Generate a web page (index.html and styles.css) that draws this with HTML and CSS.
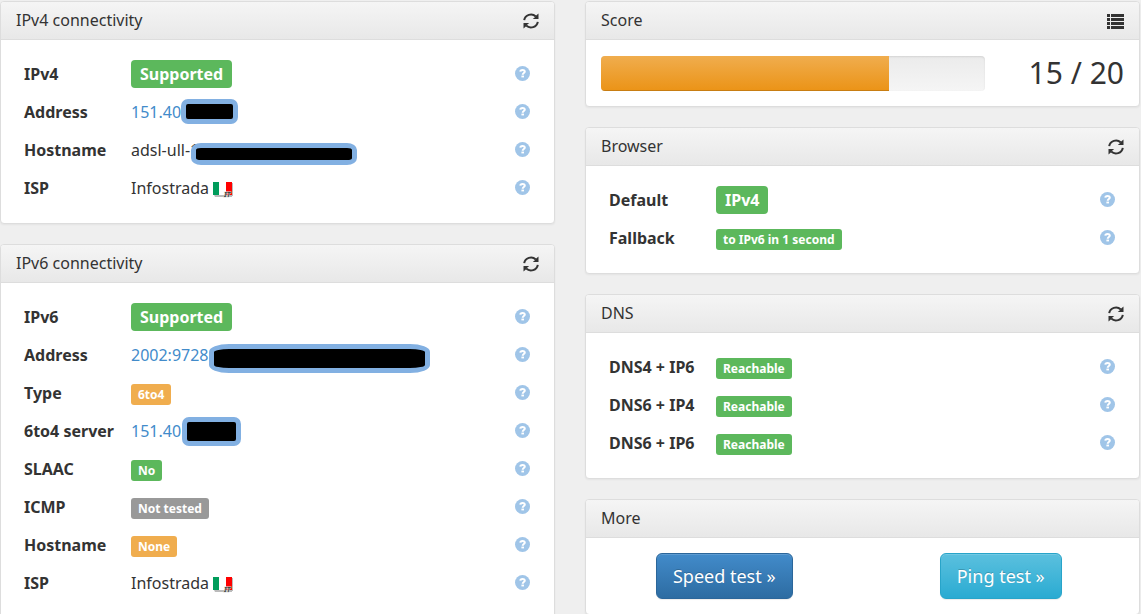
FILE: index.html
```html
<!DOCTYPE html>
<html lang="en">
<head>
<meta charset="UTF-8">
<title>IPv6 test</title>
<meta name="viewport" content="width=device-width, initial-scale=1.0">
<link rel="stylesheet" href="styles.css">
</head>
<body>

<svg class="sprite" aria-hidden="true">
  <symbol id="refresh" viewBox="0 0 16 16">
    <path d="M1.2 7.2A6.9 6.6 0 0 1 12.8 3.4M14.8 8.8A6.9 6.6 0 0 1 3.2 12.6" fill="none" stroke="currentColor" stroke-width="2"/>
    <path d="M15.5 .4V6H9.8L11.6 4.4L13.2 2.4ZM.5 15.6V10H6.2L4.4 11.6L2.8 13.6Z" fill="currentColor"/>
  </symbol>
  <symbol id="list" viewBox="0 0 17 16">
    <path d="M0 1h3v3H0zM4 1h13v3H4zM0 5h3v3H0zM4 5h13v3H4zM0 9h3v3H0zM4 9h13v3H4zM0 13h3v3H0zM4 13h13v3H4z" fill="currentColor"/>
  </symbol>
  <symbol id="help" viewBox="0 0 15 15">
    <circle cx="7.5" cy="7.5" r="7.5" fill="#a0c5e8"/>
    <path d="M5.3 5.6C5.4 3.4 9.8 3.3 9.8 5.6C9.8 7.1 7.7 7 7.7 8.7" fill="none" stroke="#fff" stroke-width="2"/>
    <path d="M6.4 9.6h2.6v1.8H6.4z" fill="#fff"/>
  </symbol>
  <symbol id="flag-it" viewBox="0 0 21 17">
    <path d="M1 14h18v2H2zM19 2h1v13h-1z" fill="#bbb"/>
    <path d="M0 1h6v13H0z" fill="#009c5b"/>
    <path d="M6 1h7v12H6z" fill="#fff"/>
    <path d="M13 1h6v13h-6z" fill="#f00"/>
    <text x="11" y="16" font-family="Noto Sans, sans-serif" font-size="7" font-style="italic" font-weight="bold" fill="#444" stroke="#ddd" stroke-width="1" paint-order="stroke">IT</text>
  </symbol>
</svg>

<main>
  <div class="column">
    <section class="panel">
      <div class="panel-heading">
        <h2>IPv4 connectivity</h2>
        <button class="icon-button" aria-label="Refresh IPv4"><svg class="icon"><use href="#refresh"/></svg></button>
      </div>
      <div class="panel-body">
        <table>
          <tr><th scope="row">IPv4</th><td><span class="label large success">Supported</span></td><td class="help"><a href="#" aria-label="Help"><svg><use href="#help"/></svg></a></td></tr>
          <tr><th scope="row">Address</th><td><span class="masked"><a href="#">151.40.</a><span class="mask short"></span></span></td><td class="help"><a href="#" aria-label="Help"><svg><use href="#help"/></svg></a></td></tr>
          <tr><th scope="row">Hostname</th><td><span class="masked">adsl-ull-1<span class="mask host"></span></span></td><td class="help"><a href="#" aria-label="Help"><svg><use href="#help"/></svg></a></td></tr>
          <tr><th scope="row">ISP</th><td>Infostrada <svg class="flag"><use href="#flag-it"/></svg></td><td class="help"><a href="#" aria-label="Help"><svg><use href="#help"/></svg></a></td></tr>
        </table>
      </div>
    </section>

    <section class="panel">
      <div class="panel-heading">
        <h2>IPv6 connectivity</h2>
        <button class="icon-button" aria-label="Refresh IPv6"><svg class="icon"><use href="#refresh"/></svg></button>
      </div>
      <div class="panel-body">
        <table>
          <tr><th scope="row">IPv6</th><td><span class="label large success">Supported</span></td><td class="help"><a href="#" aria-label="Help"><svg><use href="#help"/></svg></a></td></tr>
          <tr><th scope="row">Address</th><td><span class="masked"><a href="#">2002:9728:</a><span class="mask long"></span></span></td><td class="help"><a href="#" aria-label="Help"><svg><use href="#help"/></svg></a></td></tr>
          <tr><th scope="row">Type</th><td><span class="label warning">6to4</span></td><td class="help"><a href="#" aria-label="Help"><svg><use href="#help"/></svg></a></td></tr>
          <tr><th scope="row">6to4 server</th><td><span class="masked"><a href="#">151.40.</a><span class="mask server"></span></span></td><td class="help"><a href="#" aria-label="Help"><svg><use href="#help"/></svg></a></td></tr>
          <tr><th scope="row">SLAAC</th><td><span class="label success">No</span></td><td class="help"><a href="#" aria-label="Help"><svg><use href="#help"/></svg></a></td></tr>
          <tr><th scope="row">ICMP</th><td><span class="label">Not tested</span></td><td class="help"><a href="#" aria-label="Help"><svg><use href="#help"/></svg></a></td></tr>
          <tr><th scope="row">Hostname</th><td><span class="label warning">None</span></td><td class="help"><a href="#" aria-label="Help"><svg><use href="#help"/></svg></a></td></tr>
          <tr><th scope="row">ISP</th><td>Infostrada <svg class="flag"><use href="#flag-it"/></svg></td><td class="help"><a href="#" aria-label="Help"><svg><use href="#help"/></svg></a></td></tr>
        </table>
      </div>
    </section>
  </div>

  <div class="column">
    <section class="panel">
      <div class="panel-heading">
        <h2>Score</h2>
        <button class="icon-button" aria-label="Score details"><svg class="icon list"><use href="#list"/></svg></button>
      </div>
      <div class="panel-body score">
        <div class="progress"><div class="progress-bar" style="width: 75%"></div></div>
        <div class="score-total">15 / 20</div>
      </div>
    </section>

    <section class="panel">
      <div class="panel-heading">
        <h2>Browser</h2>
        <button class="icon-button" aria-label="Refresh browser"><svg class="icon"><use href="#refresh"/></svg></button>
      </div>
      <div class="panel-body">
        <table>
          <tr><th scope="row">Default</th><td><span class="label large success">IPv4</span></td><td class="help"><a href="#" aria-label="Help"><svg><use href="#help"/></svg></a></td></tr>
          <tr><th scope="row">Fallback</th><td><span class="label success">to IPv6 in 1 second</span></td><td class="help"><a href="#" aria-label="Help"><svg><use href="#help"/></svg></a></td></tr>
        </table>
      </div>
    </section>

    <section class="panel">
      <div class="panel-heading">
        <h2>DNS</h2>
        <button class="icon-button" aria-label="Refresh DNS"><svg class="icon"><use href="#refresh"/></svg></button>
      </div>
      <div class="panel-body">
        <table>
          <tr><th scope="row">DNS4 + IP6</th><td><span class="label success">Reachable</span></td><td class="help"><a href="#" aria-label="Help"><svg><use href="#help"/></svg></a></td></tr>
          <tr><th scope="row">DNS6 + IP4</th><td><span class="label success">Reachable</span></td><td class="help"><a href="#" aria-label="Help"><svg><use href="#help"/></svg></a></td></tr>
          <tr><th scope="row">DNS6 + IP6</th><td><span class="label success">Reachable</span></td><td class="help"><a href="#" aria-label="Help"><svg><use href="#help"/></svg></a></td></tr>
        </table>
      </div>
    </section>

    <section class="panel">
      <div class="panel-heading">
        <h2>More</h2>
      </div>
      <div class="panel-body more">
        <button class="btn primary">Speed test »</button>
        <button class="btn info">Ping test »</button>
      </div>
    </section>
  </div>
</main>

</body>
</html>
```

FILE: styles.css
```css
* {
  box-sizing: border-box;
}

body {
  margin: 0;
  padding: 1px 1px 0 0;
  background: #efefef;
  color: #333;
  font-family: "Noto Sans", sans-serif;
  font-size: 16px;
  line-height: 22px;
}

a {
  color: #428bca;
  text-decoration: none;
}

.sprite {
  display: none;
}

main {
  display: grid;
  grid-template-columns: 1fr 1fr;
  gap: 30px;
}

.panel {
  margin-bottom: 20px;
  background: #fff;
  border: 1px solid #ddd;
  border-radius: 4px;
  box-shadow: 0 1px 2px rgba(0,0,0,0.05);
}

.panel-heading {
  display: flex;
  justify-content: space-between;
  align-items: center;
  padding: 10px 15px;
  background: linear-gradient(#f5f5f5, #e8e8e8);
  border-bottom: 1px solid #ddd;
  border-radius: 3px 3px 0 0;
}

h2 {
  margin: 0;
  font-size: 16px;
  font-weight: normal;
  line-height: 17px;
}

.icon-button {
  padding: 0;
  border: none;
  background: none;
  color: #333;
  cursor: pointer;
}

.icon {
  display: block;
  width: 16px;
  height: 16px;
}

.icon.list {
  width: 17px;
}

.panel-body {
  padding: 16px 15px 15px;
}

table {
  width: 100%;
  border-collapse: collapse;
}

th,
td {
  height: 38px;
  padding: 0 8px 2px;
  text-align: left;
  white-space: nowrap;
}

th {
  width: 107px;
}

td.help {
  padding: 0 9px 3px 8px;
}

.help svg {
  display: block;
  width: 15px;
  height: 15px;
  margin-left: auto;
}

.flag {
  width: 21px;
  height: 17px;
  vertical-align: -4px;
}

.label {
  display: inline-block;
  padding: 0 7px;
  border-radius: 3px;
  background: #999;
  color: #fff;
  font-size: 12px;
  font-weight: bold;
  line-height: 21px;
  vertical-align: middle;
}

.label.large {
  padding: 0 9px;
  border-radius: 4px;
  font-size: 16px;
  line-height: 28px;
}

.success {
  background: #5cb85c;
}

.warning {
  background: #f0ad4e;
}

/* blacked out part of an address */
.masked {
  position: relative;
}

.mask {
  position: absolute;
  left: 100%;
  top: -2px;
  width: 57px;
  height: 25px;
  margin-left: -4px;
  border: 5px solid #82b0e2;
  border-radius: 7px;
  background: #000;
}

.mask.host {
  top: 4px;
  width: 166px;
  height: 22px;
  margin-left: -8px;
  border-radius: 10px / 7px;
}

.mask.long {
  top: 0;
  width: 221px;
  height: 29px;
  border-radius: 20px / 8px;
}

.mask.server {
  top: -3px;
  width: 59px;
  height: 29px;
  margin-left: -3px;
}

.score {
  display: flex;
}

.progress {
  flex: 1;
  height: 35px;
  overflow: hidden;
  border-radius: 4px;
  background: linear-gradient(#ebebeb, #f5f5f5);
  box-shadow: inset 0 1px 2px rgba(0,0,0,0.1);
}

.progress-bar {
  height: 100%;
  background: linear-gradient(#f0ad4e, #eb9316);
  box-shadow: inset 0 -1px 0 rgba(0,0,0,0.15);
}

.score-total {
  width: 139px;
  font-size: 30px;
  line-height: 33px;
  text-align: right;
}

.more {
  display: grid;
  grid-template-columns: 1fr 1fr;
  justify-items: center;
  padding: 15px 0;
}

.btn {
  padding: 10px 16px;
  border: 1px solid;
  border-radius: 6px;
  color: #fff;
  font-family: inherit;
  font-size: 18px;
  line-height: 24px;
  text-shadow: 0 -1px 0 rgba(0,0,0,0.2);
  box-shadow: inset 0 1px 0 rgba(255,255,255,0.15), 0 1px 1px rgba(0,0,0,0.075);
  cursor: pointer;
}

.primary {
  background: linear-gradient(#428bca, #2d6ca2);
  border-color: #2b669a;
}

.info {
  background: linear-gradient(#5bc0de, #2aabd2);
  border-color: #28a4c9;
}

@media (max-width: 700px) {
  main {
    grid-template-columns: 1fr;
    gap: 0;
  }
}
```
